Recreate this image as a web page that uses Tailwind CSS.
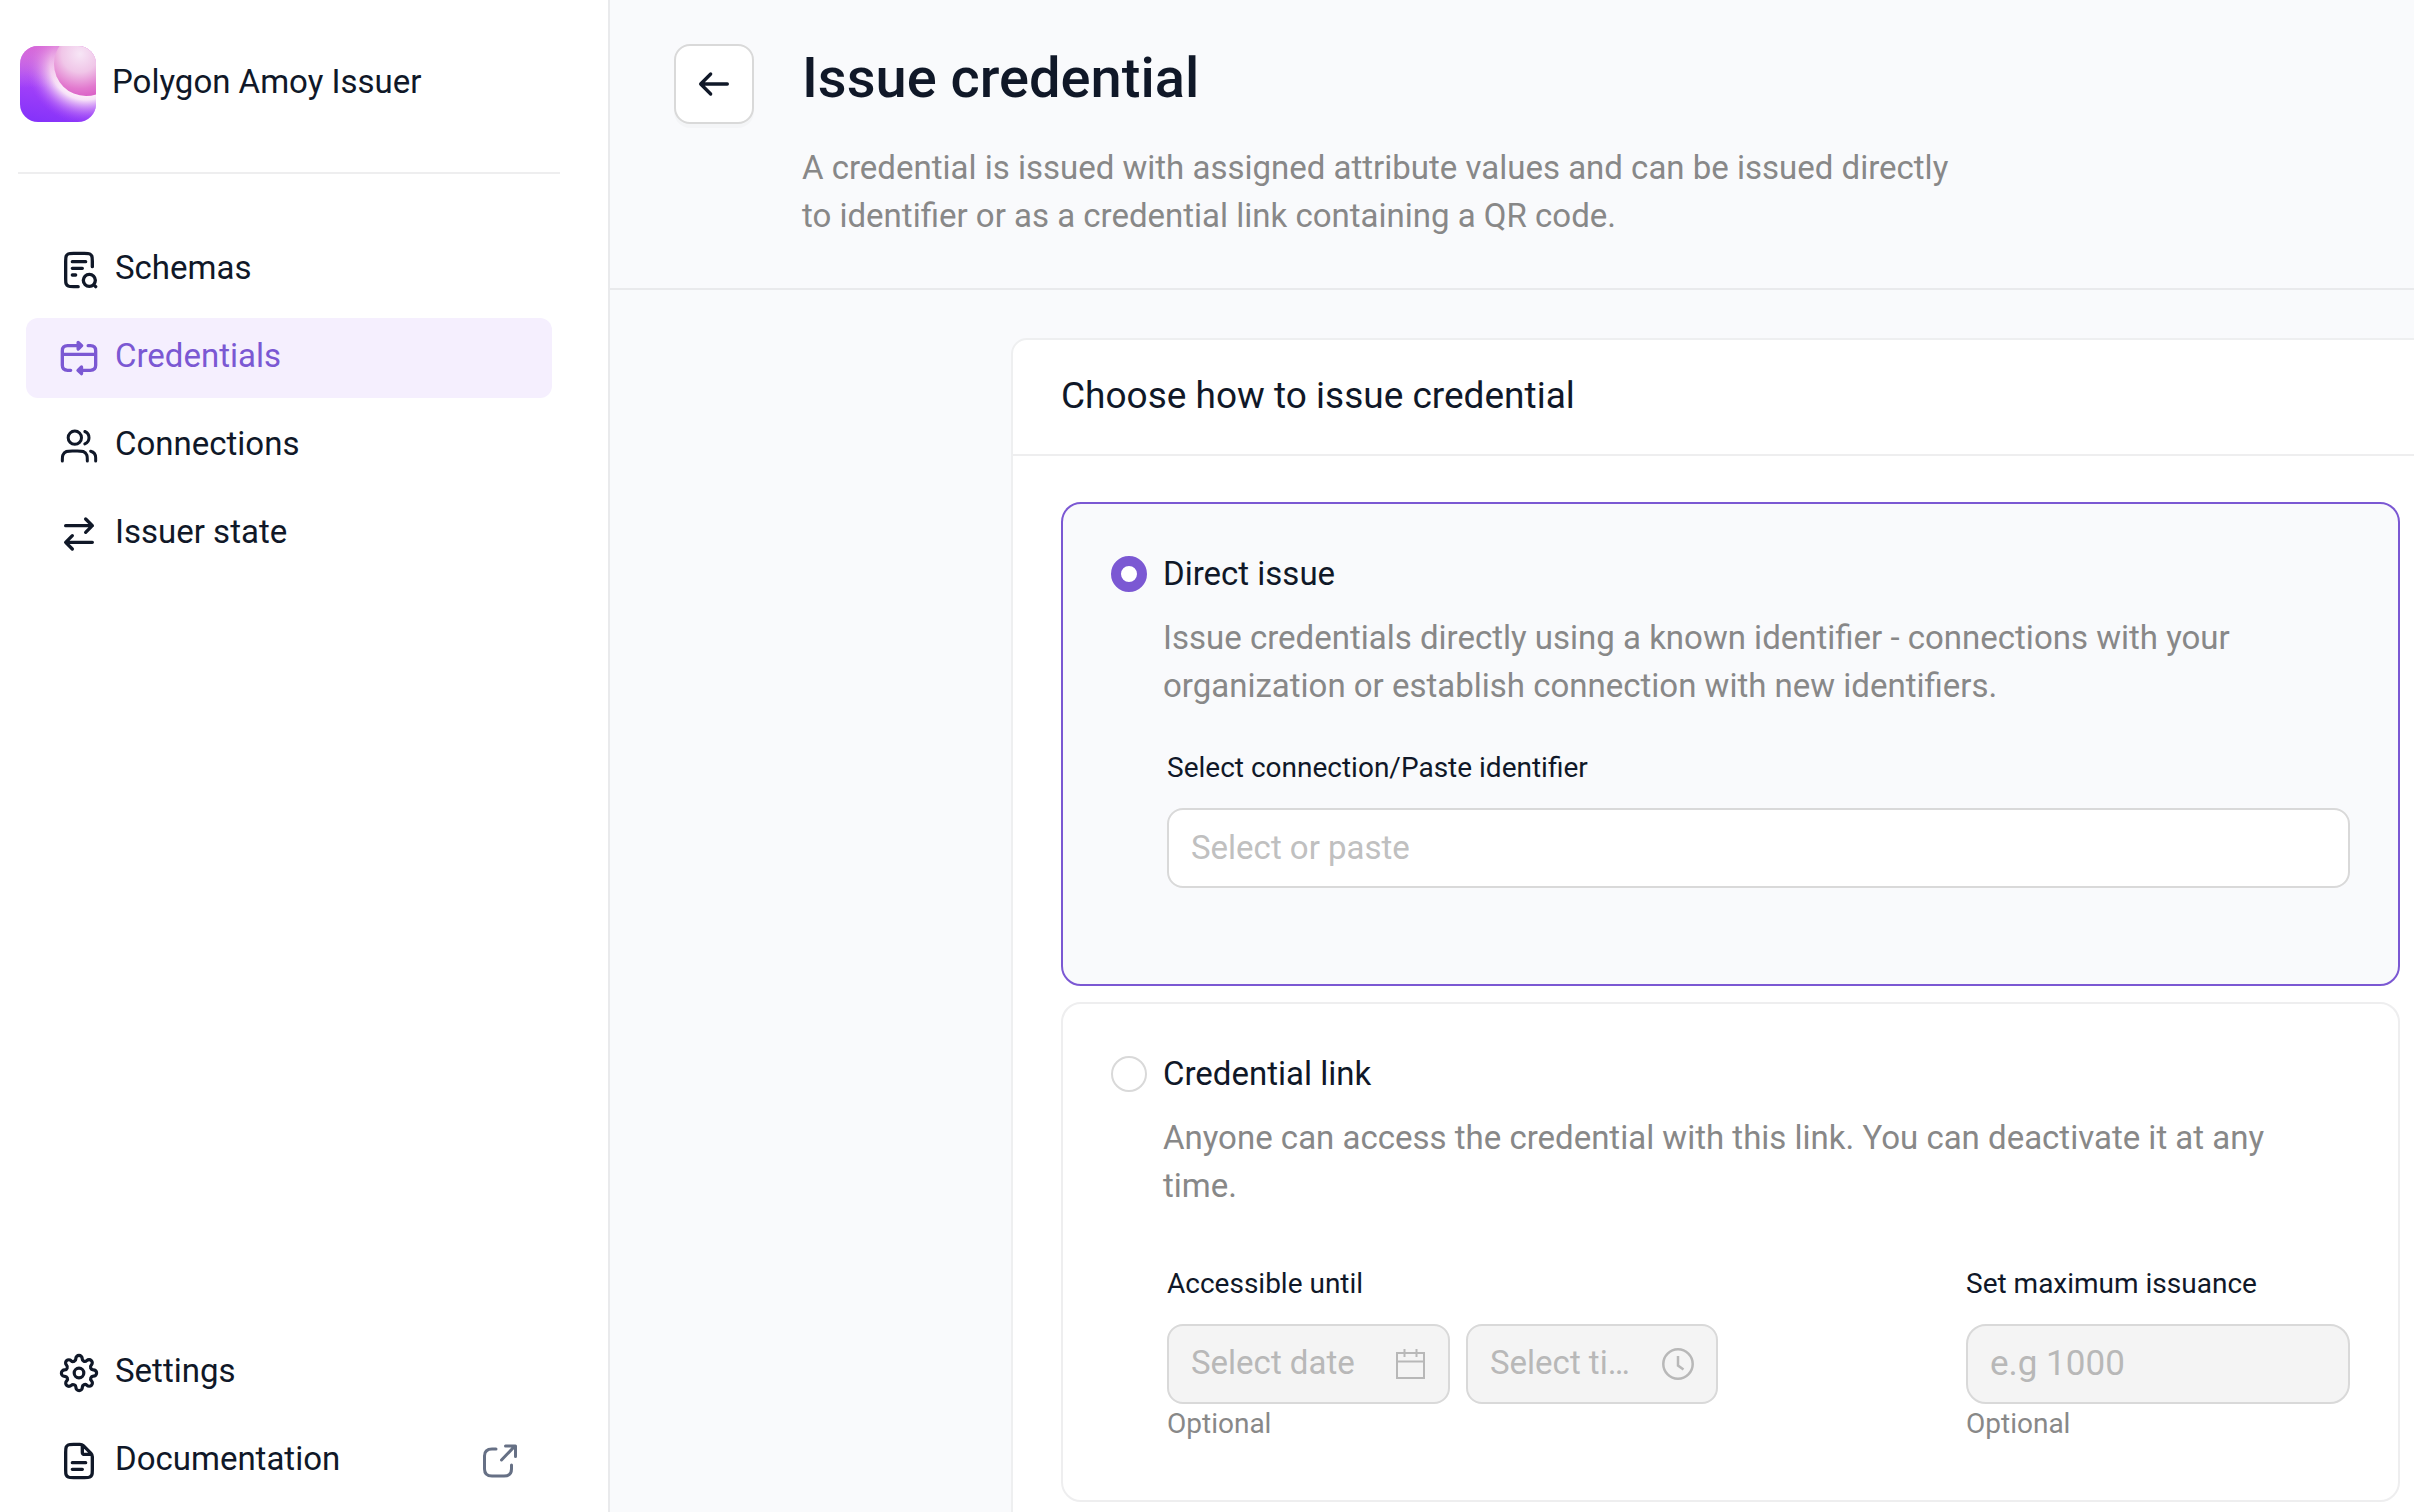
<!DOCTYPE html>
<html lang="en">
<head>
<meta charset="utf-8">
<meta name="viewport" content="width=device-width, initial-scale=1">
<title>Issue credential</title>
<script src="https://cdn.jsdelivr.net/npm/@tailwindcss/browser@4"></script>
</head>
<body class="flex h-screen overflow-hidden bg-white font-[Roboto,sans-serif] text-[33px] leading-12 text-[#101828]">

<aside class="flex w-[610px] shrink-0 flex-col border-r-2 border-[#e9eaec]">
  <div class="ml-[18px] mr-12 border-b-2 border-[#eeeeef] pb-[50px] pt-[46px]">
    <div class="flex items-center gap-4 pl-[2px]">
      <svg class="size-[76px] shrink-0 rounded-[18px]" viewBox="0 0 76 76" aria-hidden="true">
        <defs>
          <linearGradient id="base" x1="0.4" y1="0" x2="0.2" y2="1">
            <stop offset="0" stop-color="#d465e0"/><stop offset="0.45" stop-color="#a743f8"/><stop offset="1" stop-color="#8432fa"/>
          </linearGradient>
          <radialGradient id="glow" gradientUnits="userSpaceOnUse" cx="66" cy="18" r="60">
            <stop offset="0.5" stop-color="#fff6fb"/><stop offset="0.6" stop-color="#fbeaf8" stop-opacity="0.95"/><stop offset="0.78" stop-color="#e7b4f4" stop-opacity="0.45"/><stop offset="1" stop-color="#b050f5" stop-opacity="0"/>
          </radialGradient>
          <linearGradient id="shade" x1="0" y1="0" x2="0" y2="1">
            <stop offset="0" stop-color="#d968d4" stop-opacity="0.75"/><stop offset="0.55" stop-color="#e9a6dc" stop-opacity="0"/>
          </linearGradient>
          <radialGradient id="orb" gradientUnits="userSpaceOnUse" cx="60" cy="8" r="46">
            <stop offset="0" stop-color="#f7e6f6"/><stop offset="0.4" stop-color="#f0c6e8"/><stop offset="0.75" stop-color="#e27acf"/><stop offset="1" stop-color="#d858c4"/>
          </radialGradient>
        </defs>
        <rect width="76" height="76" fill="url(#base)"/>
        <rect width="76" height="76" fill="url(#glow)"/>
        <rect width="76" height="76" fill="url(#shade)"/>
        <circle cx="66" cy="18" r="32" fill="url(#orb)"/>
      </svg>
      <span class="pb-1">Polygon Amoy Issuer</span>
    </div>
  </div>

  <nav class="flex flex-1 flex-col gap-2 pb-[11px] pl-[26px] pr-14 pt-14">
    <a href="#schemas" class="flex h-20 items-center gap-4 rounded-xl px-[33px]">
      <svg class="size-10 shrink-0 fill-none stroke-current stroke-2" viewBox="0 0 24 24" stroke-linecap="round" stroke-linejoin="round" aria-hidden="true"><path d="M14 11H8M10 15H8M16 7H8M20 10V6.8C20 5.12 20 4.28 19.673 3.638C19.385 3.074 18.927 2.615 18.362 2.327C17.72 2 16.88 2 15.2 2H8.8C7.12 2 6.28 2 5.638 2.327C5.074 2.615 4.615 3.074 4.327 3.638C4 4.28 4 5.12 4 6.8V17.2C4 18.88 4 19.72 4.327 20.362C4.615 20.927 5.074 21.385 5.638 21.673C6.28 22 7.12 22 8.8 22H11.5M22 22L20.8 20.8M21.8 18.2A3.6 3.6 0 1 1 14.6 18.2A3.6 3.6 0 1 1 21.8 18.2Z"/></svg>
      <span class="pb-1">Schemas</span>
    </a>
    <a href="#credentials" aria-current="page" class="flex h-20 items-center gap-4 rounded-xl bg-[#f5effe] px-[33px] text-[#7b58d3]">
      <svg class="size-10 shrink-0 fill-none stroke-current stroke-2" viewBox="0 0 24 24" stroke-linecap="round" stroke-linejoin="round" aria-hidden="true"><path d="M2 9.8H22M13 4.6H5.2C3.4 4.6 2 5.2 2 7.6V16.4C2 18.8 3.4 19.4 5.2 19.4H7M17.5 4.6H18.8C20.6 4.6 22 5.2 22 7.6V16.4C22 18.8 20.6 19.4 18.8 19.4H12M11.5 2.6L13.6 4.6L11.5 6.6ZM13.5 17.4L11.4 19.4L13.5 21.4Z"/></svg>
      <span class="pb-1">Credentials</span>
    </a>
    <a href="#connections" class="flex h-20 items-center gap-4 rounded-xl px-[33px]">
      <svg class="size-10 shrink-0 fill-none stroke-current stroke-[1.8]" viewBox="0 0 24 24" stroke-linecap="round" stroke-linejoin="round" aria-hidden="true"><path d="M22 21V19C22 17.136 20.725 15.57 19 15.126M15.5 3.291C16.966 3.884 18 5.321 18 7C18 8.679 16.966 10.116 15.5 10.709M17 21C17 19.136 17 18.204 16.696 17.469C16.29 16.489 15.511 15.71 14.531 15.305C13.796 15 12.864 15 11 15H8C6.136 15 5.204 15 4.469 15.305C3.489 15.71 2.71 16.489 2.304 17.469C2 18.204 2 19.136 2 21M13.5 7A4 4 0 1 1 5.5 7A4 4 0 1 1 13.5 7Z"/></svg>
      <span class="pb-1">Connections</span>
    </a>
    <a href="#issuer-state" class="flex h-20 items-center gap-4 rounded-xl px-[33px]">
      <svg class="size-10 shrink-0 fill-none stroke-current stroke-2" viewBox="0 0 24 24" stroke-linecap="round" stroke-linejoin="round" aria-hidden="true"><path d="M20 17H4M4 17L8 13M4 17L8 21M4 7H20M20 7L16 3M20 7L16 11"/></svg>
      <span class="pb-1">Issuer state</span>
    </a>
    <a href="#settings" class="mt-auto flex h-20 items-center gap-4 rounded-xl px-[33px]">
      <svg class="size-10 shrink-0 fill-none stroke-current stroke-2" viewBox="-0.5 -0.5 25 25" stroke-linecap="round" stroke-linejoin="round" aria-hidden="true"><circle cx="12" cy="12" r="3"/><path d="M19.4 15a1.65 1.65 0 0 0 .33 1.82l.06.06a2 2 0 0 1 0 2.83 2 2 0 0 1-2.83 0l-.06-.06a1.65 1.65 0 0 0-1.82-.33 1.65 1.65 0 0 0-1 1.51V21a2 2 0 0 1-2 2 2 2 0 0 1-2-2v-.09A1.65 1.65 0 0 0 9 19.4a1.65 1.65 0 0 0-1.82.33l-.06.06a2 2 0 0 1-2.83 0 2 2 0 0 1 0-2.83l.06-.06a1.65 1.65 0 0 0 .33-1.82 1.65 1.65 0 0 0-1.51-1H3a2 2 0 0 1-2-2 2 2 0 0 1 2-2h.09A1.65 1.65 0 0 0 4.6 9a1.65 1.65 0 0 0-.33-1.82l-.06-.06a2 2 0 0 1 0-2.83 2 2 0 0 1 2.83 0l.06.06a1.65 1.65 0 0 0 1.82.33H9a1.65 1.65 0 0 0 1-1.51V3a2 2 0 0 1 2-2 2 2 0 0 1 2 2v.09a1.65 1.65 0 0 0 1 1.51 1.65 1.65 0 0 0 1.82-.33l.06-.06a2 2 0 0 1 2.83 0 2 2 0 0 1 0 2.83l-.06.06a1.65 1.65 0 0 0-.33 1.82V9a1.65 1.65 0 0 0 1.51 1H21a2 2 0 0 1 2 2 2 2 0 0 1-2 2h-.09a1.65 1.65 0 0 0-1.51 1z"/></svg>
      <span class="pb-1">Settings</span>
    </a>
    <a href="#documentation" class="flex h-20 items-center gap-4 rounded-xl px-[33px]">
      <svg class="size-10 shrink-0 fill-none stroke-current stroke-2" viewBox="0 0 24 24" stroke-linecap="round" stroke-linejoin="round" aria-hidden="true"><path d="M14 2.5V6.4C14 6.96 14 7.24 14.109 7.454C14.205 7.642 14.358 7.795 14.546 7.891C14.76 8 15.04 8 15.6 8H19.5M16 13H8M14 17H8M20 9.5V17.2C20 18.88 20 19.72 19.673 20.362C19.385 20.927 18.927 21.385 18.362 21.673C17.72 22 16.88 22 15.2 22H8.8C7.12 22 6.28 22 5.638 21.673C5.074 21.385 4.615 20.927 4.327 20.362C4 19.72 4 18.88 4 17.2V6.8C4 5.12 4 4.28 4.327 3.638C4.615 3.074 5.074 2.615 5.638 2.327C6.28 2 7.12 2 8.8 2H12.5C13.5 2 14 2.2 14.6 2.8L19.2 7.4C19.8 8 20 8.5 20 9.5Z"/></svg>
      <span class="pb-1">Documentation</span>
      <svg class="ml-auto size-10 shrink-0 fill-none stroke-[#667085] stroke-3" viewBox="0 0 40 40" stroke-linecap="round" stroke-linejoin="round" aria-hidden="true"><path d="M17 8H13C8 8 5.500 10 5.500 15V28C5.500 33 8 35 13 35H25C30 35 32.500 33 32.500 28V24M22.500 19L36 5M26.500 5H36.500V15.500"/></svg>
    </a>
  </nav>
</aside>

<main class="min-w-0 flex-1 overflow-hidden bg-[#f9fafc]">
  <header class="flex items-start gap-12 border-b-2 border-[#e9eaec] pb-12 pl-16 pr-12 pt-11">
    <button type="button" aria-label="Back" class="flex size-20 shrink-0 items-center justify-center rounded-2xl border-2 border-[#d9d9d9] bg-white shadow-[0_4px_0_rgba(0,0,0,0.02)]">
      <svg class="size-10 fill-none stroke-current stroke-2" viewBox="0 0 24 24" stroke-linecap="round" stroke-linejoin="round" aria-hidden="true"><path d="M20 12H4M10 18L4 12L10 6"/></svg>
    </button>
    <div class="max-w-[1160px]">
      <h1 class="text-[56px] font-medium leading-17">Issue credential</h1>
      <p class="mt-8 leading-12 text-[#888888]">A credential is issued with assigned attribute values and can be issued directly to identifier or as a credential link containing a QR code.</p>
    </div>
  </header>

  <form class="-mr-9 pb-12 pl-[401px] pt-12">
    <section class="rounded-2xl border-2 border-[#eeeff0] bg-white">
      <h2 class="border-b-2 border-[#eeeeef] px-12 pb-9 pt-[34px] text-[37px] leading-11">Choose how to issue credential</h2>
      <div class="flex flex-col gap-4 px-12 py-[46px]">

        <div class="flex items-start gap-4 rounded-[20px] border-2 border-[#7b58d3] bg-[#f9fafc] px-12 pb-24 pt-[46px]">
          <input id="direct" type="radio" name="method" checked class="mt-[6px] size-9 shrink-0 appearance-none rounded-full border-2 border-[#d9d9d9] bg-white checked:border-[10px] checked:border-[#7b58d3]">
          <div class="min-w-0 flex-1">
            <label for="direct" class="block leading-12">Direct issue</label>
            <p class="mt-4 max-w-[1110px] leading-12 text-[#888888]">Issue credentials directly using a known identifier - connections with your organization or establish connection with new identifiers.</p>
            <div class="mt-[38px] pl-1">
              <label for="identifier" class="block text-[28px] leading-10">Select connection/Paste identifier</label>
              <input id="identifier" type="text" placeholder="Select or paste" class="mt-5 block h-20 w-full rounded-2xl border-2 border-[#d9d9d9] bg-white px-[22px] pb-[2px] placeholder:text-[#c0c0c0]">
            </div>
          </div>
        </div>

        <div class="flex items-start gap-4 rounded-[20px] border-2 border-[#eeeeef] bg-white px-12 pb-14 pt-[46px]">
          <input id="link" type="radio" name="method" class="mt-[6px] size-9 shrink-0 appearance-none rounded-full border-2 border-[#d9d9d9] bg-white checked:border-[10px] checked:border-[#7b58d3]">
          <div class="min-w-0 flex-1">
            <label for="link" class="block leading-12">Credential link</label>
            <p class="mt-4 max-w-[1110px] leading-12 text-[#888888]">Anyone can access the credential with this link. You can deactivate it at any time.</p>
            <div class="mt-[54px] flex justify-between gap-12 pl-1">
              <div>
                <label for="date" class="block text-[28px] leading-10">Accessible until</label>
                <div class="mt-5 flex gap-4">
                  <div class="flex h-20 w-[283px] items-center gap-4 rounded-2xl border-2 border-[#d9d9d9] bg-[#f4f4f4] px-[22px]">
                    <input id="date" type="text" placeholder="Select date" disabled class="min-w-0 flex-1 text-ellipsis pb-[2px] placeholder:text-[#b8b8b8]">
                    <svg class="size-8 shrink-0 fill-none stroke-[#b8b8b8] stroke-2" viewBox="0 0 32 32" aria-hidden="true"><path d="M3 5H30V30H3ZM3 13.500H30M10.500 1V9M22.500 1V9"/></svg>
                  </div>
                  <div class="flex h-20 w-[252px] items-center gap-8 rounded-2xl border-2 border-[#d9d9d9] bg-[#f4f4f4] px-[22px]">
                    <input type="text" aria-label="Time" placeholder="Select time" disabled class="min-w-0 flex-1 text-ellipsis pb-[2px] placeholder:text-[#b8b8b8]">
                    <svg class="size-8 shrink-0 fill-none stroke-[#b8b8b8] stroke-[2.500]" viewBox="0 0 32 32" aria-hidden="true"><circle cx="16" cy="16" r="14.700"/><path d="M16 8V17.500L21.500 21.500"/></svg>
                  </div>
                </div>
                <p class="text-[28px] leading-10 text-[#888888]">Optional</p>
              </div>
              <div class="w-[384px]">
                <label for="maximum" class="block text-[28px] leading-10">Set maximum issuance</label>
                <input id="maximum" type="text" placeholder="e.g 1000" disabled class="mt-5 block h-20 w-full rounded-[20px] border-2 border-[#d9d9d9] bg-[#f4f4f4] px-[22px] pb-[2px] text-[35px] placeholder:text-[#b8b8b8]">
                <p class="text-[28px] leading-10 text-[#888888]">Optional</p>
              </div>
            </div>
          </div>
        </div>

      </div>
    </section>
  </form>
</main>
</body>
</html>
